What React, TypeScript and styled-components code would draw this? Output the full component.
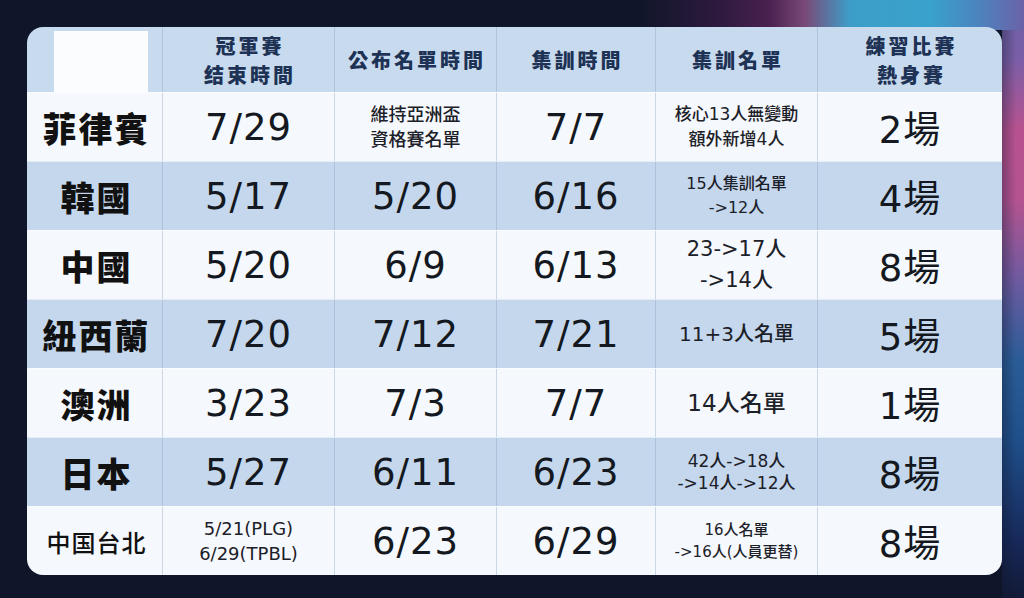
import React from "react";
import styled, { createGlobalStyle } from "styled-components";

const Global = createGlobalStyle`
  html, body { margin: 0; padding: 0; background: #10162a; }
  * { box-sizing: border-box; }
`;

const Page = styled.div`
  width: 1024px;
  height: 598px;
  overflow: hidden;
  padding: 27px 22px 23px 27px;
  background:
    linear-gradient(90deg, rgba(16,22,42,0) 0px, rgba(16,22,42,0) 640px, #2e1a3e 720px, #4a2150 770px, #7a4a78 805px, #3c9ec8 850px, #39a2cc 930px, #4a86c0 975px, #6a62a8 1024px) 0 0 / 100% 30px no-repeat,
    linear-gradient(90deg, rgba(16,22,42,0.35) 0px, rgba(16,22,42,0) 14px) 100% 0 / 22px 100% no-repeat,
    linear-gradient(180deg, #6a62a8 0px, #7a5ea6 60px, #b8528f 130px, #b4538f 200px, #6e5aa0 280px, #2a5d98 360px, #1f4f8a 440px, #17295a 540px, #121a36 598px) 100% 0 / 22px 100% no-repeat,
    #10162a;
`;

const Table = styled.div`
  display: grid;
  grid-template-rows: 65px repeat(7, 69px);
  border-radius: 16px;
  overflow: hidden;
  width: 975px;
`;

const Row = styled.div<{ $tone: "head" | "blue" | "white" }>`
  display: grid;
  grid-template-columns: 136px 172px 162px 159px 162px 184px;
  background: ${(p) => (p.$tone === "white" ? "#f5f8fc" : p.$tone === "blue" ? "#c4d7ed" : "#c8daee")};
  border-top: ${(p) => (p.$tone === "head" ? "none" : "1px solid rgba(255,255,255,0.55)")};
`;

const Cell = styled.div<{ $last?: boolean }>`
  display: flex;
  flex-direction: column;
  align-items: center;
  justify-content: center;
  text-align: center;
  border-right: ${(p) => (p.$last ? "none" : "1px solid rgba(130,155,190,0.35)")};
  overflow: hidden;
`;

const Blank = styled.div`
  align-self: start;
  margin: 3px 0 0 27px;
  width: 94px;
  height: 61px;
  background: #fbfcfe;
`;

const HeadCell = styled(Cell)`
  font-family: "Noto Sans CJK TC", sans-serif;
  font-weight: 900;
  font-size: 20px;
  line-height: 29px;
  letter-spacing: 3px;
  color: #1d3254;
  padding-left: 3px;
`;

const Country = styled(Cell)<{ $plain?: boolean }>`
  font-family: ${(p) => (p.$plain ? '"Noto Sans CJK SC", serif' : '"Noto Sans CJK TC", sans-serif')};
  font-weight: ${(p) => (p.$plain ? 500 : 900)};
  font-size: ${(p) => (p.$plain ? "24px" : "34px")};
  letter-spacing: ${(p) => (p.$plain ? "1px" : "2px")};
  color: #111;
  padding-left: 4px;
`;

const Big = styled(Cell)`
  font-family: "DejaVu Sans", "Noto Sans CJK TC", sans-serif;
  font-size: 37px;
  letter-spacing: 1px;
  color: #141820;
`;

const Note = styled(Cell)<{ $size: number; $lh: number }>`
  font-family: "DejaVu Sans", "Noto Sans CJK TC", sans-serif;
  font-size: ${(p) => p.$size}px;
  line-height: ${(p) => p.$lh}px;
  color: #1c2028;
  font-weight: 500;
  white-space: nowrap;
`;

type Val = string | { lines: string[]; size: number; lh: number };

type Data = { name: string; plain?: boolean; vals: Val[] };

const rows: Data[] = [
  {
    name: "菲律賓",
    vals: ["7/29", { lines: ["維持亞洲盃", "資格賽名單"], size: 18, lh: 25 }, "7/7", { lines: ["核心13人無變動", "額外新增4人"], size: 17, lh: 25 }, "2場"],
  },
  {
    name: "韓國",
    vals: ["5/17", "5/20", "6/16", { lines: ["15人集訓名單", "->12人"], size: 16, lh: 24 }, "4場"],
  },
  {
    name: "中國",
    vals: ["5/20", "6/9", "6/13", { lines: ["23->17人", "->14人"], size: 21, lh: 31 }, "8場"],
  },
  {
    name: "紐西蘭",
    vals: ["7/20", "7/12", "7/21", { lines: ["11+3人名單"], size: 20, lh: 26 }, "5場"],
  },
  {
    name: "澳洲",
    vals: ["3/23", "7/3", "7/7", { lines: ["14人名單"], size: 23, lh: 30 }, "1場"],
  },
  {
    name: "日本",
    vals: ["5/27", "6/11", "6/23", { lines: ["42人->18人", "->14人->12人"], size: 17, lh: 22 }, "8場"],
  },
  {
    name: "中国台北",
    plain: true,
    vals: [{ lines: ["5/21(PLG)", "6/29(TPBL)"], size: 18, lh: 25 }, "6/23", "6/29", { lines: ["16人名單", "->16人(人員更替)"], size: 15, lh: 22 }, "8場"],
  },
];

const heads = [["冠軍賽", "结束時間"], ["公布名單時間"], ["集訓時間"], ["集訓名單"], ["練習比賽", "熱身賽"]];

function renderVal(v: Val, i: number, last: boolean) {
  if (typeof v === "string") {
    return (
      <Big key={i} $last={last}>
        {v}
      </Big>
    );
  }
  return (
    <Note key={i} $last={last} $size={v.size} $lh={v.lh}>
      {v.lines.map((l) => (
        <div key={l}>{l}</div>
      ))}
    </Note>
  );
}

export default function App() {
  return (
    <>
      <Global />
      <Page>
        <Table>
          <Row $tone="head">
            <Cell>
              <Blank />
            </Cell>
            {heads.map((h, i) => (
              <HeadCell key={i} $last={i === heads.length - 1}>
                {h.map((l) => (
                  <div key={l}>{l}</div>
                ))}
              </HeadCell>
            ))}
          </Row>
          {rows.map((r, ri) => (
            <Row key={r.name} $tone={ri % 2 === 0 ? "white" : "blue"}>
              <Country $plain={r.plain}>{r.name}</Country>
              {r.vals.map((v, i) => renderVal(v, i, i === r.vals.length - 1))}
            </Row>
          ))}
        </Table>
      </Page>
    </>
  );
}
